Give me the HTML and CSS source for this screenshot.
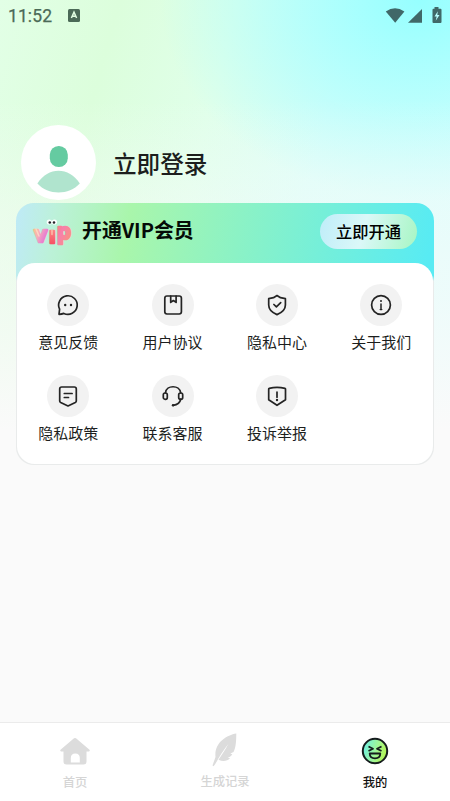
FILE: index.html
```html
<!DOCTYPE html>
<html lang="zh-CN">
<head>
<meta charset="utf-8">
<title>我的</title>
<link rel="stylesheet" href="styles.css">
</head>
<body>
<div class="screen">
  <header class="status">
    <span class="time">11:52</span>
    <svg class="notice" width="12" height="13" viewBox="0 0 12 13"><rect width="12" height="13" rx="1.5" fill="#4b6a57"/><path d="M3.4 9 6 3.2 8.6 9M4.4 7.2h3.2" fill="none" stroke="#e2fee2" stroke-width="1.5"/></svg>
    <svg class="signals" width="58" height="18" viewBox="0 0 58 18"><g fill="#406868"><path d="M.8 4.400Q10 -1.800 19.400 4.400L10.200 15.800Z"/><path d="M37 2V15.800H23Z"/><path d="M49.500 0h4v1.700h2q1 0 1 1v12.200q0 1-1 1h-7q-1 0-1-1V2.700q0-1 1-1h1z"/></g><path d="M52.800 4.300 49.500 9.500h2.200l-1 4.200 3.800-5.600h-2.200z" fill="#baffff"/></svg>
  </header>

  <section class="profile">
    <div class="avatar">
      <svg width="75" height="75" viewBox="0 0 75 75"><rect x="28.800" y="21" width="18" height="21" rx="8.800" fill="#65cba1"/><path d="M16.400 58.500C27 41.500 48 41.500 58.800 58.500C48 70.500 27 70.500 16.400 58.500Z" fill="#b0e4ce"/></svg>
    </div>
    <h1>立即登录</h1>
  </section>

  <main class="card">
    <div class="vip">
      <svg class="viplogo" width="42" height="32" viewBox="0 0 42 32">
        <defs>
          <linearGradient id="v" x1="0" y1="0" x2="1" y2="1"><stop stop-color="#fbcb78"/><stop offset=".4" stop-color="#f8b0b8"/><stop offset=".7" stop-color="#e87fd0"/><stop offset="1" stop-color="#ff9a65"/></linearGradient>
          <linearGradient id="i" x1="0" y1="0" x2="0" y2="1"><stop stop-color="#ffb09c"/><stop offset="1" stop-color="#f5405a"/></linearGradient>
          <linearGradient id="p" x1="0" y1="0" x2="1" y2="1"><stop stop-color="#ff7a6c"/><stop offset=".45" stop-color="#f780ac"/><stop offset="1" stop-color="#f79a70"/></linearGradient>
        </defs>
        <g class="viptext"><text x="3.500" y="26" fill="url(#v)" stroke="url(#v)">v</text><text x="18" y="26.500" fill="url(#i)" stroke="url(#i)">ı</text><text x="26" y="23" fill="url(#p)" stroke="url(#p)">p</text></g>
        <path d="M5 13l3 7M21 14.500v4" stroke="#ffeccd" stroke-width="1.500" stroke-linecap="round" fill="none" opacity=".6"/>
        <g fill="#fff"><circle cx="18.300" cy="6" r="2.600"/><circle cx="23.400" cy="6" r="2.600"/></g><g fill="#26242a"><circle cx="18.800" cy="6.500" r="1.300"/><circle cx="23" cy="6.500" r="1.300"/></g>
      </svg>
      <h2>开通VIP会员</h2>
      <button class="open">立即开通</button>
    </div>
    <div class="panel">
      <div class="item"><span class="disc"><svg viewBox="0 0 24 24"><path d="M3 21.300 3.600 16.200A9.300 9.300 0 1 1 7.800 20.400Q6 21.200 3 21.300Z"/><path class="dot" d="M9.200 12h.01M15 12h.01"/></svg></span><span>意见反馈</span></div>
      <div class="item"><span class="disc"><svg viewBox="0 0 24 24"><rect x="3.800" y="3" width="16.600" height="18" rx="2.200"/><path d="M9.700 3.200v6.200l2.700-1.900 2.700 1.900V3.200"/></svg></span><span>用户协议</span></div>
      <div class="item"><span class="disc"><svg viewBox="0 0 24 24"><path d="M12 2.500 15.500 4.700 20.400 5.700V12Q20.400 18.200 12 21.600Q3.700 18.200 3.700 12V5.700L8.500 4.700Z"/><path d="m8.900 11.500 2.500 2.400 4.300-4.200"/></svg></span><span>隐私中心</span></div>
      <div class="item"><span class="disc"><svg viewBox="0 0 24 24"><circle cx="12" cy="12" r="9.400"/><path class="thin" d="M12 11v5.400M11.300 16.500h1.400"/><path class="dot small" d="M12 8h.01"/></svg></span><span>关于我们</span></div>
      <div class="item"><span class="disc"><svg viewBox="0 0 24 24"><path d="M5.700 3h12.600q2 0 2 2v12q0 1-1 1.600L12 22 4.700 18.600q-1-.6-1-1.600V5q0-2 2-2Z"/><path d="M8.300 9.500h7.800M8.300 13.500h4.200"/></svg></span><span>隐私政策</span></div>
      <div class="item"><span class="disc"><svg viewBox="0 0 24 24"><path d="M4.400 8.900C5.500 .7 18.500 .7 19.700 8.900M19.700 15.200C19 18.500 16.500 20.800 12.200 21.300"/><rect x="2.300" y="9" width="4" height="6.300" rx="1.800"/><rect x="17.700" y="9" width="4" height="6.300" rx="1.800"/><path class="dot" d="M12 21.200h.01"/></svg></span><span>联系客服</span></div>
      <div class="item"><span class="disc"><svg viewBox="0 0 24 24"><path d="M4.200 4.300Q12 2.500 20 4.300q.5 .1 .5 .8V15.800L12 21.300 3.700 15.800V5.100q0-.7 .5-.8Z"/><path d="M12 8v5.200"/><path class="dot" d="M12 16h.01"/></svg></span><span>投诉举报</span></div>
    </div>
  </main>

  <nav class="tabs">
    <div class="tab"><svg width="32" height="34" viewBox="0 0 32 34"><path fill="#dcdcdc" fill-rule="evenodd" d="M15 4.300q1-.8 2 0L30.500 15.800q.8 1-.5 1.800h-2.500V27.500q0 3-3 3h-17q-3 0-3-3V17.600H2q-1.300-.8-.5-1.800ZM11.800 28.500h9v-4.500q0-4.500-4.500-4.500t-4.500 4.500Z"/></svg><span>首页</span></div>
    <div class="tab record"><svg width="32" height="36" viewBox="0 0 32 36"><path fill="#dcdcdc" d="M27.300 1.500C17.500 3 5 11 6.500 25L3.500 33.500l1 .7C7.500 31 10 24 19.300 12C16 18 12.500 23.500 9.500 27.800c4.200 1.900 8.700 1.600 11.500-1.500l-2.500-.8c2.200-.1 3.700-1.400 4.800-3.200l-2-.8 3.200-1.500C27 15.500 27.300 8 27.300 1.500Z"/></svg><span>生成记录</span></div>
    <div class="tab active"><svg width="30" height="34" viewBox="0 0 30 34"><defs><linearGradient id="f" x1="0" y1=".3" x2="1" y2=".6"><stop stop-color="#6cefe5"/><stop offset=".55" stop-color="#a0f797"/><stop offset="1" stop-color="#b5f34c"/></linearGradient></defs><circle cx="15" cy="17" r="12.200" fill="url(#f)" stroke="#151c1d" stroke-width="2"/><g fill="none" stroke="#151c1d" stroke-width="1.800" stroke-linejoin="round"><path d="m8.500 12.500 4.500 2.300-4.500 2.200M21.500 12.500 17 14.800l4.500 2.200M9.700 19.500h10.600q0 4.800-5.300 4.800t-5.300-4.800Z"/></g></svg><span>我的</span></div>
  </nav>
</div>
</body>
</html>
```

FILE: styles.css
```css
* { box-sizing: border-box; }
body { margin: 0; font-family: "Noto Sans CJK SC", sans-serif; color: #1c1e1d; }
h1, h2 { margin: 0; }
.screen {
  display: flex; flex-direction: column; height: 801px; width: 450px;
  background:
    linear-gradient(180deg, rgba(250,250,250,0) 0, rgba(250,250,250,0) 100px, rgba(250,250,250,.4) 210px, rgba(250,250,250,.7) 330px, #fafafa 430px),
    radial-gradient(ellipse 260px 200px at 420px 0, #96ffff 0, rgba(165,255,255,.7) 45%, rgba(200,255,255,0) 100%),
    linear-gradient(105deg, #e2ffe6 0, #dcfedc 18%, #e0ffea 36%, #dcfef8 54%, #d8feff 100%);
}
.status { display: flex; align-items: center; height: 32px; padding: 0 7px 0 8px; }
.time { font: 400 17.5px/32px Roboto, sans-serif; color: #4b6a57; width: 60px; letter-spacing: .1px; -webkit-text-stroke: .25px #4b6a57; }
.notice { margin-top: -2px; }
.signals { margin-left: auto; margin-top: 0; }
.profile { display: flex; align-items: center; height: 75px; margin: 93px 0 3px 21px; gap: 17px; }
.avatar { width: 75px; height: 75px; border-radius: 50%; background: #fff; }
.avatar svg { display: block; }
h1 { font-size: 23.6px; line-height: 36px; font-weight: 500; }
.card { width: 418px; height: 262px; margin-left: 16px; border-radius: 18px; background: linear-gradient(180deg, rgba(236,239,239,0) 73px, #e9ebeb 78px), linear-gradient(100deg, #bfeaf8 0, #bcf1d9 9%, #a9f6ab 25%, #58ebf3 91%); }
.vip { display: flex; align-items: center; height: 60px; padding: 0 17px 0 15px; }
.viplogo { margin-top: -2px; }
.viptext { font: 700 22px "Open Sans", sans-serif; stroke-width: 2.6; stroke-linejoin: round; }
h2 { margin: -8px 0 0 9px; font-size: 19.9px; font-weight: 700; color: #050b07; white-space: nowrap; }
.open { margin: -3px 0 0 auto; width: 97px; height: 35px; padding: 0 0 2px; border: 0; border-radius: 18px; background: linear-gradient(105deg, #c2eef9 5%, #dbf8f8 45%, #a7f6c3 100%); font: 500 16.3px "Noto Sans CJK SC", sans-serif; color: #000; }
.panel { display: grid; grid-template-columns: repeat(4, 104.4px); grid-auto-rows: 91px; align-content: start; height: 201px; margin: 0 1px; padding-top: 21px; border-radius: 18px; background: #fff; }
.item { display: flex; flex-direction: column; align-items: center; font-size: 15px; line-height: 22px; gap: 5px; margin-left: -1px; margin-right: 1px; }
.disc { display: flex; align-items: center; justify-content: center; width: 42px; height: 42px; border-radius: 50%; background: #f2f2f2; }
.disc svg { width: 24px; height: 24px; fill: none; stroke: #242424; stroke-width: 1.7; stroke-linecap: round; stroke-linejoin: round; }
.disc .dot { stroke-width: 2.4; }
.disc .small { stroke-width: 2; }
.disc .thin { stroke-width: 1.5; }
.tabs { display: grid; grid-template-columns: repeat(3, 1fr); height: 79px; margin-top: auto; background: #fff; border-top: 1px solid #ebebeb; }
.tab { display: flex; flex-direction: column; align-items: center; padding-top: 11px; font-size: 12.3px; line-height: 18px; color: #d5d5d5; gap: 5px; font-weight: 500; }
.record { padding-top: 9px; gap: 4px; }
.active { color: #111; }
```
